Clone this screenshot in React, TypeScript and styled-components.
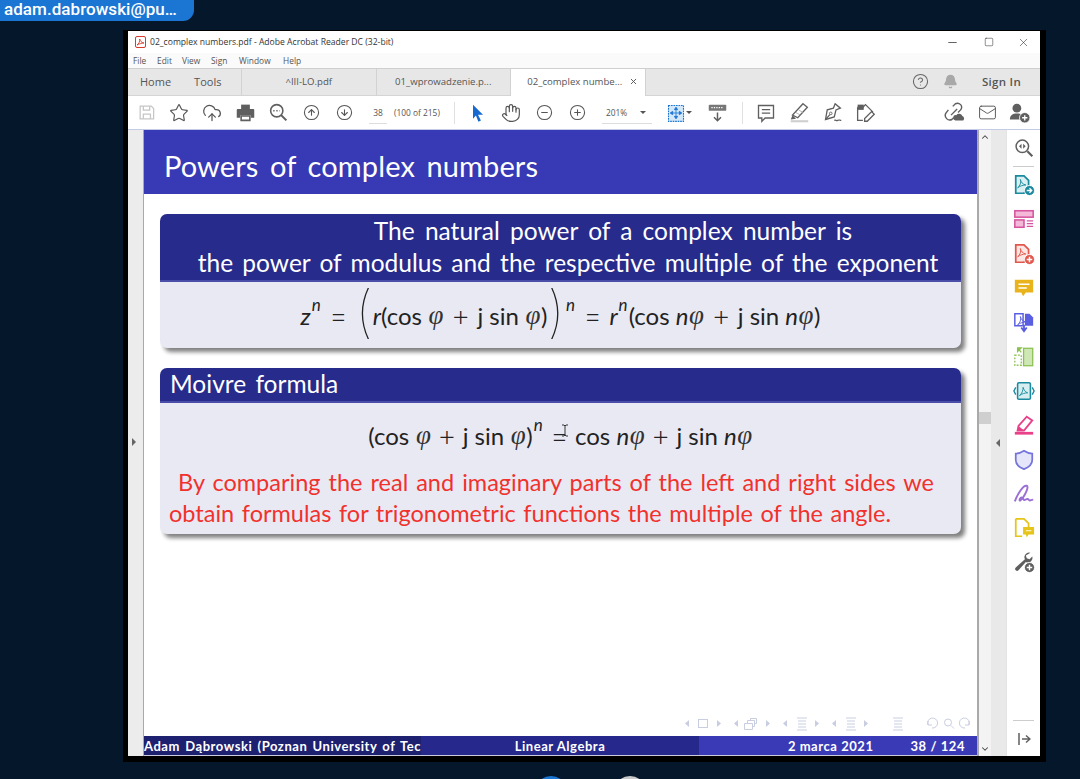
import React from "react";
import styled, { createGlobalStyle } from "styled-components";
import {
  Star, CloudUpload, CircleArrowUp, CircleArrowDown, Hand, CircleMinus, CirclePlus,
  CircleHelp, Bell, Mail, X, Minus, Square, ChevronUp, ChevronDown,
} from "lucide-react";

const Global = createGlobalStyle`
  html, body { margin: 0; padding: 0; background: #05172b; }
  * { box-sizing: border-box; }
`;

const UI = `"Open Sans", "Noto Sans", sans-serif`;
const TEX = `Lato, "Open Sans", sans-serif`;

const Page = styled.div`
  position: relative;
  width: 1080px;
  height: 779px;
  overflow: hidden;
  background: #05172b;
  font-family: ${UI};
`;
const Pill = styled.div`
  width: 194px;
  height: 21px;
  background: #1b76d3;
  border-radius: 0 0 11px 0;
  color: #fff;
  font: 500 17px/18px Roboto, sans-serif;
  padding-left: 4px;
  letter-spacing: 0.05px;
`;
const Frame = styled.div`
  margin: 9px 0 0 123px;
  width: 923px;
  height: 732px;
  background: #000;
  padding: 1px 6px 6px 5px;
`;
const Win = styled.div`
  width: 912px;
  height: 725px;
  background: #fff;
  display: flex;
  flex-direction: column;
`;
const TitleBar = styled.div`
  height: 22px;
  flex: none;
  display: flex;
  align-items: center;
  padding-left: 7px;
  font-size: 8.6px;
  color: #333;
  background: #fff;
`;
const TitleText = styled.span`flex: 1; margin-left: 4px;`;
const WinBtn = styled.span<{ $w?: number }>`
  width: ${(p) => p.$w ?? 34}px;
  display: flex;
  justify-content: center;
  color: #222;
`;
const MenuBar = styled.div`
  height: 15px;
  flex: none;
  display: flex;
  align-items: center;
  padding-left: 5px;
  background: #fafafa;
  color: #555;
  font-size: 8.4px;
`;
const MenuItem = styled.span<{ $w: number }>`width: ${(p) => p.$w}px;`;
const TabBar = styled.div`
  height: 28px;
  flex: none;
  display: flex;
  background: #e7e7e7;
  border-top: 1px solid #cfcfcf;
  border-bottom: 1px solid #d4d4d4;
  color: #555;
  font-size: 10px;
`;
const NavTabs = styled.div`
  width: 114px;
  display: flex;
  align-items: center;
  gap: 23px;
  padding: 0 0 2px 12px;
  font-size: 11px;
  border-right: 1px solid #d2d2d2;
`;
const Tab = styled.div<{ $active?: boolean }>`
  width: 134.5px;
  display: flex;
  align-items: center;
  justify-content: center;
  gap: 7px;
  border-right: 1px solid #d2d2d2;
  background: ${(p) => (p.$active ? "#fff" : "transparent")};
  margin-bottom: ${(p) => (p.$active ? "-1px" : "0")};
  padding: 0 0 2px ${(p) => (p.$active ? "10px" : "0")};
  font-size: 9.6px;
`;
const TabSpacer = styled.div`flex: 1;`;
const TabRight = styled.div`
  display: flex;
  align-items: center;
  color: #666;
  padding: 0 19px 2px 0;
`;
const SignIn = styled.span`
  font-size: 11.5px;
  font-weight: 600;
  color: #555;
  margin-left: 9px;
  letter-spacing: 0.3px;
`;
const ToolBar = styled.div`
  height: 34px;
  flex: none;
  display: flex;
  align-items: center;
  background: #fff;
  border-bottom: 1px solid #c4cbe6;
  color: #555;
  font-size: 8.4px;
`;
const Cell = styled.span<{ $w?: number }>`
  width: ${(p) => p.$w ?? 33}px;
  flex: none;
  display: flex;
  justify-content: center;
  align-items: center;
`;
const PageNo = styled.span`
  width: 18px;
  flex: none;
  text-align: center;
  line-height: 21px;
  border-bottom: 1px solid #ddd;
  font-size: 8.4px;
`;
const PageOf = styled.span`
  margin-left: 7px;
  width: 60px;
  flex: none;
  font-size: 8.4px;
  white-space: nowrap;
`;
const Sep = styled.span`
  width: 1px;
  height: 22px;
  background: #e0e0e0;
  flex: none;
`;
const Zoom = styled.span`
  width: 50px;
  flex: none;
  display: flex;
  justify-content: space-between;
  align-items: center;
  padding: 0 6px 0 4px;
  line-height: 21px;
  border-bottom: 1px solid #ddd;
`;
const Caret = styled.span`
  width: 0; height: 0;
  border-left: 3px solid transparent;
  border-right: 3px solid transparent;
  border-top: 3px solid #555;
`;
const Body = styled.div`
  flex: 1;
  display: flex;
  min-height: 0;
`;
const LeftRail = styled.div`
  width: 16px;
  flex: none;
  background: #ececec;
  border-right: 1px solid #a9a9a9;
  display: flex;
  align-items: center;
  padding: 0 0 2px 4px;
`;
const TriR = styled.span`
  width: 0; height: 0;
  border-top: 4px solid transparent;
  border-bottom: 4px solid transparent;
  border-left: 4px solid #666;
`;
const TriL = styled.span`
  width: 0; height: 0;
  border-top: 4px solid transparent;
  border-bottom: 4px solid transparent;
  border-right: 4px solid #666;
`;
const Slide = styled.div`
  width: 833px;
  flex: none;
  background: #fff;
  display: flex;
  flex-direction: column;
  font-family: ${TEX};
`;
const SlideHead = styled.div`
  height: 64px;
  flex: none;
  background: #3739b5;
  color: #fff;
  font-size: 29px;
  line-height: 72px;
  padding-left: 20px;
  letter-spacing: 0.12px;
  word-spacing: 4px;
`;
const Blocks = styled.div`
  flex: 1;
  display: flex;
  flex-direction: column;
  gap: 20px;
  padding: 20px 16px 0 16px;
`;
const Block = styled.div`
  border-radius: 7px;
  overflow: hidden;
  box-shadow: 4px 4px 4px #808080;
  background: #e9e9f4;
`;
const BlockTitle = styled.div<{ $center?: boolean }>`
  background: #272b8c;
  color: #fff;
  font-size: 24.5px;
  line-height: 32px;
  padding: ${(p) => (p.$center ? "1px 0 1px" : "0 0 1px 10px")};
  text-align: ${(p) => (p.$center ? "center" : "left")};
  word-spacing: 3px;
  border-bottom: 2px solid #4a4ea8;
`;
const TitleLine = styled.div<{ $off: number; $ws: number }>`
  white-space: nowrap;
  margin-left: ${(p) => p.$off}px;
  word-spacing: ${(p) => p.$ws}px;
`;
const Formula = styled.div<{ $h: number }>`
  height: ${(p) => p.$h}px;
  display: flex;
  justify-content: center;
  align-items: center;
  color: #222;
  font-size: 24px;
  white-space: pre;
  position: relative;
`;
const I = styled.i`font-style: italic;`;
const Phi = styled.i`font-style: italic; font-family: "Liberation Serif", serif; font-size: 27px; color: #333; margin: 0 0.5px;`;
const Sup = styled.sup`font-size: 17px; font-style: italic; line-height: 0; position: relative; top: -10px; margin: 0 1px; vertical-align: baseline;`;
const BigP = styled.span`font-family: Inter, sans-serif; font-size: 56px; font-weight: 100; line-height: 40px; position: relative; top: -4px;`;
const Op = styled.span<{ $m?: number }>`font-family: Inter, sans-serif; font-weight: 200; margin: 0 ${(p) => p.$m ?? 7}px; font-size: 30px; line-height: 24px;`;
const Cursor = styled.svg`
  position: absolute;
  left: 401px;
  top: 21px;
`;
const RedText = styled.div`
  color: #f1312c;
  font-size: 23.5px;
  line-height: 31px;
  padding: 0 0 5px 9px;
  word-spacing: 1.6px;
  white-space: nowrap;
`;
const RedIndent = styled.span`margin-left: 9px; word-spacing: 2px;`;
const NavSvg = styled.svg`
  display: block;
  margin: 0 0 5px 538px;
  flex: none;
`;
const Foot = styled.div`
  height: 20px;
  flex: none;
  display: flex;
  color: #fff;
  font-weight: 700;
  font-size: 13px;
  line-height: 20px;
  letter-spacing: 0.55px;
  border-bottom: 1px solid #ccd;
`;
const FootCell = styled.div<{ $bg: string; $w: number }>`
  width: ${(p) => p.$w}px;
  background: ${(p) => p.$bg};
  white-space: nowrap;
  overflow: hidden;
  display: flex;
  justify-content: center;
`;
const FootLeft = styled.span`width: 100%; text-align: left; word-spacing: 1.6px;`;
const FootRight = styled.div`
  flex: 1;
  background: #3a3ab6;
  display: flex;
  justify-content: flex-end;
  gap: 37px;
  padding-right: 12px;
`;
const Scroll = styled.div`
  width: 29px;
  flex: none;
  display: flex;
  background: #e9e9e9;
  border-left: 2px solid #a9a9a9;
`;
const ScrollTrack = styled.div`
  width: 12px;
  background: #f3f3f3;
  display: flex;
  flex-direction: column;
  align-items: center;
  color: #444;
  padding: 2px 0 2px;
`;
const Thumb = styled.div`
  width: 12px;
  height: 12px;
  margin-top: 270px;
  background: #cfcfcf;
`;
const Grow = styled.div`flex: 1;`;
const Split = styled.div`
  flex: 1;
  display: flex;
  align-items: center;
  padding: 0 0 0 5px;
`;
const RightRail = styled.div`
  flex: 1;
  background: #fff;
  border-left: 1px solid #e4e4e4;
  display: flex;
  flex-direction: column;
  align-items: center;
`;
const RailItem = styled.div<{ $h?: number }>`
  height: ${(p) => p.$h ?? 34.3}px;
  flex: none;
  display: flex;
  align-items: center;
  justify-content: center;
`;
const RailRule = styled.div`
  width: 21px;
  height: 1px;
  flex: none;
  margin: 0 0 1px;
  background: #ccc;
`;
const Dot = styled.div<{ $x: number; $c: string }>`
  position: absolute;
  left: ${(p) => p.$x}px;
  top: 776px;
  width: 32px;
  height: 32px;
  border-radius: 50%;
  background: ${(p) => p.$c};
`;

const Pdf = ({ c }: { c: string }) => (
  <path d="M5 15c3-2 4-6 3-9 1 3 2 5 6 6-3 0-6 1-9 3z" fill="none" stroke={c} strokeWidth="1" />
);
const G = "#5f5f5f";

const ic = (children: React.ReactNode, s = 22, v = 24) => (
  <svg width={s} height={s} viewBox={`0 0 ${v} ${v}`} fill="none">{children}</svg>
);

const AcroLogo = () => (
  <svg width="11" height="12" viewBox="0 0 11 12">
    <rect x="0.5" y="0.5" width="10" height="11" rx="1.5" fill="#fff" stroke="#d8392b" />
    <path d="M2 9c2-1 3-4 2.7-6 .5 2 1.5 3.500 4.300 4C6.500 7 4 8 2 9z" fill="none" stroke="#d8392b" strokeWidth="0.9" />
  </svg>
);
const SaveI = () => ic(<><path d="M4 4h14l3 3v13H4z" stroke="#c6c6c6" strokeWidth="1.600" /><path d="M8 4v5h8V4M8 20v-6h9v6" stroke="#c6c6c6" strokeWidth="1.600" /></>, 19);
const PrintI = () => ic(<><path d="M7 3h10v5H7z" fill={G} /><path d="M3 8h18a1 1 0 0 1 1 1v9h-4v-3H6v3H2V9a1 1 0 0 1 1-1z" fill={G} /><path d="M7 16h10v5H7z" stroke={G} strokeWidth="1.800" fill="#fff" /></>, 21);
const FindI = () => ic(<><circle cx="10" cy="10" r="7" stroke={G} strokeWidth="1.800" /><path d="M15 15l6 6" stroke={G} strokeWidth="2.400" /><path d="M6 10h1.500M9.500 10h1.500M13 10h.5" stroke={G} strokeWidth="1.500" /></>, 21);
const Pointer = () => ic(<path d="M6 2l12 12h-6l3.500 7-3 1.500-3-7.500L6 19z" fill="#1669d0" />, 20);
const FitI = () => ic(<><rect x="3" y="3" width="18" height="19" fill="#d4e8fa" stroke="#1b76d3" strokeWidth="1.300" strokeDasharray="2 1" /><path d="M12 6v12M6 12h12M12 5l-2 3h4zM12 19l-2-3h4zM5 12l3-2v4zM19 12l-3-2v4z" fill="#1b76d3" stroke="#1b76d3" /></>, 20);
const KeyI = () => ic(<><rect x="2" y="3" width="20" height="7" rx="1" fill="#777" /><path d="M5 6.500h14" stroke="#fff" strokeWidth="1.500" strokeDasharray="1.500 1.300" /><path d="M12 12v9M8 17.500l4 4 4-4" stroke={G} strokeWidth="1.700" /></>, 21);
const CommentI = () => ic(<><path d="M3 3h18v15H11l-4 4v-4H3z" stroke={G} strokeWidth="1.600" /><path d="M7 8h10M7 12h10" stroke={G} strokeWidth="1.500" /></>, 20);
const HiliteI = () => ic(<><path d="M16 2l5 4L10 18l-6-3z" stroke={G} strokeWidth="1.500" fill="#fff" /><path d="M8 12l5 3M11 9l5 3" stroke="#aaa" /><path d="M4 15l-2 5 6-1z" fill={G} /><path d="M2 22h20" stroke="#cfcfcf" strokeWidth="2.400" /></>, 21);
const NibI = () => ic(<><path d="M15 2l6 5-5 2-2 8-10 3 2-11 7-2z" stroke={G} strokeWidth="1.500" /><circle cx="10" cy="13" r="1.500" stroke={G} /><path d="M4 20l5-5.500M14 21c2-1 2 1 4 0s2 0 4 0" stroke={G} strokeWidth="1.300" /></>, 21);
const DocPen = () => ic(<><path d="M3 6h6l3-3 8 8-1 1M3 6v15h6" stroke={G} strokeWidth="1.500" /><path d="M3 3h7v6H3z" fill={G} /><path d="M19 11l3 3-8 8h-3v-3z" stroke={G} strokeWidth="1.500" fill="#fff" /></>, 21);
const LinkI = () => ic(<><path d="M10 5l3-3c2-1 4-1 6 1s1 5 0 6l-3 3M5 9l-3 4c-1 2-1 4 1 6s4 2 6 1l2-2M8 15l7-7" stroke={G} strokeWidth="1.600" /><path d="M13 21a3 3 0 0 1 1-6 4 4 0 0 1 7 1 3 3 0 0 1 1 5z" fill={G} /></>, 21);
const UserI = () => ic(<><circle cx="9" cy="7" r="5" fill={G} /><path d="M1 20c0-5 3-7 8-7s8 2 8 7z" fill={G} /><circle cx="18" cy="18" r="6" fill={G} stroke="#fff" /><path d="M18 15v6M15 18h6" stroke="#fff" strokeWidth="1.500" /></>, 21);
const RailZoom = () => ic(<><circle cx="10" cy="10" r="7.500" stroke={G} strokeWidth="1.800" /><path d="M16 16l6 6" stroke={G} strokeWidth="2.600" /><path d="M9 7l-3 3 3 3zM11 7l3 3-3 3z" fill={G} /></>, 20);

const Badge = ({ c, plus }: { c: string; plus?: boolean }) => (
  <>
    <circle cx="18" cy="18" r="5.500" fill={c} stroke="#fff" />
    {plus ? <path d="M18 15v6M15 18h6" stroke="#fff" strokeWidth="1.600" /> : <path d="M15 18h5M18 15.500l2.500 2.500-2.500 2.500" stroke="#fff" strokeWidth="1.400" />}
  </>
);
const DocShape = ({ c, fill }: { c: string; fill: string }) => <path d="M3 2h9l5 5v7l-5 7H3z" fill={fill} stroke={c} strokeWidth="1.900" />;

const rail = [
  ic(<><DocShape c="#1b8a9e" fill="#d9eff1" /><Pdf c="#1b8a9e" /><Badge c="#1b8a9e" /></>),
  ic(<><rect x="2" y="3" width="20" height="7" fill="#f4b9d8" stroke="#d6559f" strokeWidth="1.700" /><rect x="2" y="13" width="10" height="8" fill="#f4b9d8" stroke="#d6559f" strokeWidth="1.700" /><path d="M15 14h7M15 17h7M15 20h7" stroke="#d6559f" strokeWidth="1.300" /></>),
  ic(<><DocShape c="#e2574c" fill="#fbe6e4" /><Pdf c="#e2574c" /><Badge c="#e2574c" plus /></>),
  ic(<><path d="M2 3h20v14h-8l-3 4-2-4H2z" fill="#e9b31c" /><path d="M6 8h12M6 12h9" stroke="#fff" strokeWidth="1.600" /></>),
  ic(<><path d="M2 3h9v13H2z" fill="#fff" stroke="#5a5ee0" strokeWidth="1.600" /><path d="M13 3h5l4 4v9h-9z" fill="#5a5ee0" /><Pdf c="#5a5ee0" /><path d="M12 15v6M9 18l3 4 3-4" stroke="#5a5ee0" strokeWidth="2" /></>),
  ic(<><rect x="11.500" y="2.500" width="10" height="19" fill="#cfe6b5" stroke="#8cc152" strokeWidth="1.400" /><rect x="2" y="10" width="7" height="11" stroke="#8cc152" strokeWidth="1.400" strokeDasharray="2 1.500" /><path d="M9 2l-4 0 0 4zM5 2l4 5" fill="#8cc152" stroke="#8cc152" strokeWidth="1.400" /></>),
  ic(<><rect x="5" y="3" width="14" height="18" rx="1.500" fill="#d6eef0" stroke="#1b8a9e" strokeWidth="1.700" /><path d="M7 17c3-2 4-6 4-9 1 3 2 5 5 6-3 0-6 1-9 3z" stroke="#1b8a9e" /><path d="M3 8l-2 4 2 4M21 8l2 4-2 4" stroke="#1b8a9e" strokeWidth="1.500" /></>),
  ic(<><path d="M15 3l6 4-9 11H5l1-5z" fill="#fff" stroke="#e8418a" strokeWidth="2" /><path d="M2 21h20" stroke="#e8418a" strokeWidth="3" /><path d="M6 13l6 5-7 0z" fill="#e8418a" /></>),
  ic(<path d="M12 2c3 2 6 3 9 3v7c0 5-4 8-9 10-5-2-9-5-9-10V5c3 0 6-1 9-3z" fill="#e6e6fb" stroke="#7474dc" strokeWidth="1.900" />),
  ic(<><path d="M2 20C5 12 11 2 15 3c3 1-3 13-7 16-2 1 0-4 2-3s1 4 4 2 3 1 4 1 2 0 4-1" stroke="#9b6fd6" strokeWidth="2.100" /></>),
  ic(<><path d="M3 2h9l5 5v4M3 2v19h7" stroke="#e6c419" strokeWidth="1.900" /><path d="M11 11h12v8h-6l-2 3-1-3h-3z" fill="#e6c419" /><path d="M14 15h6" stroke="#fff" /></>),
  ic(<><path d="M19 2a5 5 0 0 0-6 7L3 18a2 2 0 0 0 3 3l8-9a5 5 0 0 0 7-6l-3 3-3-1-1-3z" fill={G} /><Badge c={G} plus /></>),
];

const NavBar = () => {
  const c = "#c9cde2";
  const arr = (x: number, d: 1 | -1) => <path d={d < 0 ? `M${x + 4} 4v7l-4-3.500z` : `M${x} 4v7l4-3.500z`} fill={c} />;
  const lines = (x: number) => <path d={`M${x} 2h10M${x + 1} 5h8M${x + 1} 8h8M${x + 1} 11h8M${x} 14h10`} stroke={c} strokeWidth="1.100" />;
  return (
    <NavSvg width="290" height="15" viewBox="0 0 290 15" fill="none">
      {arr(3, -1)}<rect x="16.500" y="3.500" width="9" height="8" stroke={c} />{arr(35, 1)}
      {arr(52, -1)}<path d="M62.500 7.500h8v6h-8zM65.500 7V4.500h7v6h-2M68.500 4V2.500h6v5h-2" stroke={c} />{arr(84, 1)}
      {arr(101, -1)}{lines(115)}{arr(133, 1)}
      {arr(150, -1)}{lines(164)}{arr(182, 1)}
      {lines(211)}
      <path d="M246 9a5 5 0 1 1 4 3M246 5v4h4" stroke={c} /><circle cx="266" cy="6.500" r="3.500" stroke={c} /><path d="M269 9.500l3 3" stroke={c} />
      <path d="M287 9a5 5 0 1 0-4 3M287 5v4h-4" stroke={c} />
    </NavSvg>
  );
};

export default function App() {
  return (
    <Page>
      <Global />
      <Pill>adam.dabrowski@pu…</Pill>
      <Frame>
        <Win>
          <TitleBar>
            <AcroLogo />
            <TitleText>02_complex numbers.pdf - Adobe Acrobat Reader DC (32-bit)</TitleText>
            <WinBtn $w={40}><Minus size={13} strokeWidth={1.300} /></WinBtn>
            <WinBtn><Square size={10} strokeWidth={1.200} /></WinBtn>
            <WinBtn><X size={13} strokeWidth={1} /></WinBtn>
          </TitleBar>
          <MenuBar>
            <MenuItem $w={24}>File</MenuItem>
            <MenuItem $w={25}>Edit</MenuItem>
            <MenuItem $w={29}>View</MenuItem>
            <MenuItem $w={28}>Sign</MenuItem>
            <MenuItem $w={44}>Window</MenuItem>
            <MenuItem $w={30}>Help</MenuItem>
          </MenuBar>
          <TabBar>
            <NavTabs><span>Home</span><span>Tools</span></NavTabs>
            <Tab>^III-LO.pdf</Tab>
            <Tab>01_wprowadzenie.p...</Tab>
            <Tab $active>02_complex numbe... <X size={9} strokeWidth={2.500} /></Tab>
            <TabSpacer />
            <TabRight>
              <CircleHelp size={17} strokeWidth={1.500} />
              <Cell $w={44}><Bell size={15} fill="#a8a8a8" color="#a8a8a8" /></Cell>
              <SignIn>Sign In</SignIn>
            </TabRight>
          </TabBar>
          <ToolBar>
            <Cell $w={1.5} />
            <Cell><SaveI /></Cell>
            <Cell><Star size={20} strokeWidth={1.400} /></Cell>
            <Cell><CloudUpload size={20} strokeWidth={1.500} /></Cell>
            <Cell><PrintI /></Cell>
            <Cell><FindI /></Cell>
            <Cell><CircleArrowUp size={17} strokeWidth={1.500} /></Cell>
            <Cell><CircleArrowDown size={17} strokeWidth={1.500} /></Cell>
            <Cell $w={8.5} />
            <PageNo>38</PageNo>
            <PageOf>(100 of 215)</PageOf>
            <Sep />
            <Cell $w={6.5} />
            <Cell><Pointer /></Cell>
            <Cell><Hand size={20} strokeWidth={1.400} /></Cell>
            <Cell><CircleMinus size={17} strokeWidth={1.500} /></Cell>
            <Cell><CirclePlus size={17} strokeWidth={1.500} /></Cell>
            <Cell $w={8.5} />
            <Zoom>201% <Caret /></Zoom>
            <Cell $w={14} />
            <Cell $w={20}><FitI /></Cell>
            <Cell $w={6}><Caret /></Cell>
            <Cell $w={14.5} />
            <Cell $w={21}><KeyI /></Cell>
            <Cell $w={14.5} />
            <Sep />
            <Cell $w={6.5} />
            <Cell><CommentI /></Cell>
            <Cell><HiliteI /></Cell>
            <Cell><NibI /></Cell>
            <Cell><DocPen /></Cell>
            <Cell $w={56} />
            <Cell><LinkI /></Cell>
            <Cell><Mail size={19} strokeWidth={1.200} /></Cell>
            <Cell $w={32}><UserI /></Cell>
          </ToolBar>
          <Body>
            <LeftRail><TriR /></LeftRail>
            <Slide>
              <SlideHead>Powers of complex numbers</SlideHead>
              <Blocks>
                <Block>
                  <BlockTitle $center>
                    <TitleLine $off={105} $ws={4}>The natural power of a complex number is</TitleLine>
                    <TitleLine $off={15} $ws={3}>the power of modulus and the respective multiple of the exponent</TitleLine>
                  </BlockTitle>
                  <Formula $h={66}>
                    <I>z</I><Sup>n</Sup><Op>=</Op><BigP>(</BigP><I>r</I>(cos <Phi>φ</Phi><Op>+</Op>j sin <Phi>φ</Phi>)<BigP>)</BigP><Sup>n</Sup><Op>=</Op><I>r</I><Sup>n</Sup>(cos <I>n</I><Phi>φ</Phi><Op>+</Op>j sin <I>n</I><Phi>φ</Phi>)
                  </Formula>
                </Block>
                <Block>
                  <BlockTitle>Moivre formula</BlockTitle>
                  <Formula $h={64}>
                    (cos <Phi>φ</Phi><Op $m={6}>+</Op>j sin <Phi>φ</Phi>)<Sup>n</Sup><Op $m={6}>=</Op>cos <I>n</I><Phi>φ</Phi><Op $m={6}>+</Op>j sin <I>n</I><Phi>φ</Phi>
                    <Cursor width="8" height="14" viewBox="0 0 8 14" fill="none">
                      <path d="M1 1h2l1 1 1-1h2M4 2v9M1 12h2l1-1 1 1h2" stroke="#333" strokeWidth="1" />
                    </Cursor>
                  </Formula>
                  <RedText>
                    <RedIndent>By comparing the real and imaginary parts of the left and right sides we</RedIndent>
                    <br />
                    obtain formulas for trigonometric functions the multiple of the angle.
                  </RedText>
                </Block>
              </Blocks>
              <NavBar />
              <Foot>
                <FootCell $bg="#1e2070" $w={277}><FootLeft>Adam Dąbrowski (Poznan University of Tec</FootLeft></FootCell>
                <FootCell $bg="#26288c" $w={278}>Linear Algebra</FootCell>
                <FootRight><span>2 marca 2021</span><span>38 / 124</span></FootRight>
              </Foot>
            </Slide>
            <Scroll>
              <ScrollTrack>
                <ChevronUp size={10} strokeWidth={2.500} />
                <Thumb />
                <Grow />
                <ChevronDown size={10} strokeWidth={2.500} />
              </ScrollTrack>
              <Split><TriL /></Split>
            </Scroll>
            <RightRail>
              <RailItem $h={36}><RailZoom /></RailItem>
              <RailRule />
              {rail.map((r, i) => <RailItem key={i}>{r}</RailItem>)}
              <Grow />
              <RailRule />
              <RailItem $h={34}><svg width="14" height="14" viewBox="0 0 14 14" fill="none"><path d="M2 1v12M5 7h8M9 3.500L13 7l-4 3.500" stroke={G} strokeWidth="1.500" /></svg></RailItem>
            </RightRail>
          </Body>
        </Win>
      </Frame>
      <Dot $x={535} $c="#1b76d3" />
      <Dot $x={614} $c="#c9c9c9" />
    </Page>
  );
}
